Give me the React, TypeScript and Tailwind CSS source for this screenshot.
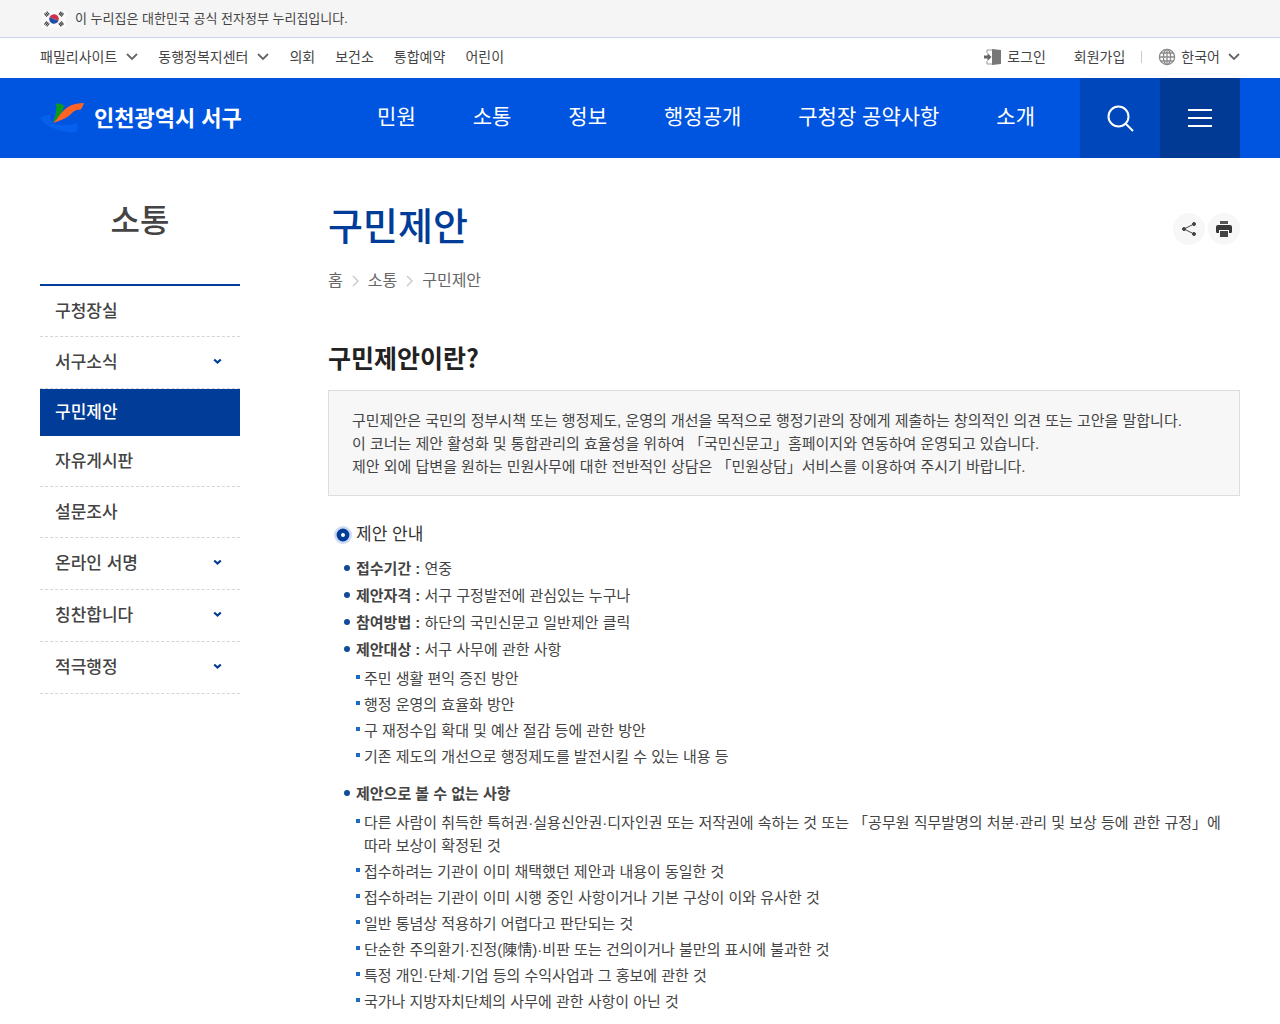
import type { ReactNode } from "react";

const FAMILY_MENUS = ["패밀리사이트", "동행정복지센터"];
const TOP_LINKS = ["의회", "보건소", "통합예약", "어린이"];
const MAIN_MENUS = ["민원", "소통", "정보", "행정공개", "구청장 공약사항", "소개"];

type SideMenu = { label: string; hasChildren?: boolean; active?: boolean };

const SIDE_MENUS: SideMenu[] = [
  { label: "구청장실" },
  { label: "서구소식", hasChildren: true },
  { label: "구민제안", active: true },
  { label: "자유게시판" },
  { label: "설문조사" },
  { label: "온라인 서명", hasChildren: true },
  { label: "칭찬합니다", hasChildren: true },
  { label: "적극행정", hasChildren: true },
];

const GUIDE = [
  { label: "접수기간 :", value: "연중" },
  { label: "제안자격 :", value: "서구 구정발전에 관심있는 누구나" },
  { label: "참여방법 :", value: "하단의 국민신문고 일반제안 클릭" },
  { label: "제안대상 :", value: "서구 사무에 관한 사항" },
];

const TARGETS = [
  "주민 생활 편익 증진 방안",
  "행정 운영의 효율화 방안",
  "구 재정수입 확대 및 예산 절감 등에 관한 방안",
  "기존 제도의 개선으로 행정제도를 발전시킬 수 있는 내용 등",
];

const EXCLUSIONS = [
  "다른 사람이 취득한 특허권·실용신안권·디자인권 또는 저작권에 속하는 것 또는 「공무원 직무발명의 처분·관리 및 보상 등에 관한 규정」에 따라 보상이 확정된 것",
  "접수하려는 기관이 이미 채택했던 제안과 내용이 동일한 것",
  "접수하려는 기관이 이미 시행 중인 사항이거나 기본 구상이 이와 유사한 것",
  "일반 통념상 적용하기 어렵다고 판단되는 것",
  "단순한 주의환기·진정(陳情)·비판 또는 건의이거나 불만의 표시에 불과한 것",
  "특정 개인·단체·기업 등의 수익사업과 그 홍보에 관한 것",
  "국가나 지방자치단체의 사무에 관한 사항이 아닌 것",
];

function Chevron() {
  return (
    <svg width="12" height="8" viewBox="0 0 12 8" fill="none" stroke="#666" strokeWidth="1.8" aria-hidden="true">
      <path d="M1 1l5 5 5-5" />
    </svg>
  );
}

function FlagIcon() {
  return (
    <svg width="24" height="18" viewBox="0 0 24 18" aria-hidden="true">
      <rect width="24" height="18" fill="#fafafa" />
      <path d="M7.2 9a4.8 4.8 0 0 1 9.6 0z" fill="#d0304a" transform="rotate(20 12 9)" />
      <path d="M7.2 9a4.8 4.8 0 0 0 9.6 0z" fill="#1f4fa8" transform="rotate(20 12 9)" />
      <g stroke="#333" strokeWidth="4" strokeDasharray="1.1 0.5">
        <path d="M3.2 5.4l3.2-2.6" />
        <path d="M17.6 2.8l3.2 2.6" />
        <path d="M3.2 12.6l3.2 2.6" />
        <path d="M17.6 15.2l3.2-2.6" />
      </g>
    </svg>
  );
}

function LogoMark() {
  return (
    <svg width="46" height="34" viewBox="0 0 46 34" aria-hidden="true">
      <path d="M0 17c3-2 6-3 10-3l1 8c8 3 16 3 27 0l-1 9c-5 1-11 0-15-1-9-2-17-6-22-13z" fill="#0560ee" />
      <path d="M16 3c3-1 6 0 8 2-1 5-5 12-12 17 4-7 5-13 4-19z" fill="#0a9a1c" />
      <path d="M13 22c5-4 8-12 15-16 5-3 10-4 16-4-1 3-2 5-4 7-4-1-7 2-10 5-5 4-11 6-17 8z" fill="#ff6426" />
    </svg>
  );
}

function LoginIcon() {
  return (
    <svg width="18" height="18" viewBox="0 0 18 18" aria-hidden="true">
      <path d="M8 1l9 1v14l-9 1z" fill="#777" />
      <path d="M8 2H3v3M3 13v3h5" fill="none" stroke="#999" />
      <path d="M0 7.5h3.5V5l4 4-4 4v-2.5H0z" fill="#666" />
    </svg>
  );
}

function GlobeIcon() {
  return (
    <svg width="18" height="18" viewBox="0 0 18 18" fill="none" stroke="#8a8a8a" strokeWidth="1.3" aria-hidden="true">
      <circle cx="9" cy="9" r="7.6" />
      <ellipse cx="9" cy="9" rx="3.6" ry="7.6" />
      <path d="M9 1.4v15.2M1.4 9h15.2M2.6 5h12.8M2.6 13h12.8" />
    </svg>
  );
}

function DotItem({ children }: { children: ReactNode }) {
  return (
    <li className="flex gap-[6px]">
      <span className="mt-2 size-[6px] shrink-0 rounded-full bg-[#124a9c]" />
      <div className="min-w-0">{children}</div>
    </li>
  );
}

function SquareList({ items }: { items: string[] }) {
  return (
    <ul className="mt-[6px] ml-7 flex flex-col gap-[3px]">
      {items.map((item) => (
        <li key={item} className="flex gap-1">
          <span className="mt-2 size-1 shrink-0 bg-[#1a6bc4]" />
          <span className="min-w-0">{item}</span>
        </li>
      ))}
    </ul>
  );
}

export default function App() {
  return (
    <div className="min-h-screen bg-white font-['Liberation_Sans','Noto_Sans_CJK_KR',sans-serif] text-[15px] leading-[23px] break-keep text-[#444]">
      <div className="flex h-[38px] items-center gap-[9px] border-b border-[#c9d3ee] bg-[#f5f5f5] px-10 text-[13px]">
        <span className="flex pl-[2px]">
          <FlagIcon />
        </span>
        <p>이 누리집은 대한민국 공식 전자정부 누리집입니다.</p>
      </div>

      <div className="flex h-10 items-center justify-between px-10 pb-[2px] text-sm">
        <div className="flex items-center gap-5">
          {FAMILY_MENUS.map((label) => (
            <button key={label} type="button" className="flex items-center gap-[9px]">
              {label}
              <Chevron />
            </button>
          ))}
          {TOP_LINKS.map((label) => (
            <a key={label} href="#">
              {label}
            </a>
          ))}
        </div>
        <div className="flex items-center">
          <a href="#" className="flex items-center gap-[5px]">
            <LoginIcon />
            로그인
          </a>
          <a href="#" className="ml-7">
            회원가입
          </a>
          <span className="mx-4 h-3 w-px bg-[#ccc]" />
          <button type="button" className="flex items-center gap-[5px]">
            <GlobeIcon />
            한국어
            <span className="ml-[3px]">
              <Chevron />
            </span>
          </button>
        </div>
      </div>

      <header className="flex h-20 items-center bg-[#0055e0] px-10 text-white">
        <a href="#" className="flex items-center gap-2 text-[22px] font-bold">
          <LogoMark />
          인천광역시 서구
        </a>
        <nav className="flex flex-1 items-center justify-end gap-[57px] pr-[45px] pb-1 text-[21px]">
          {MAIN_MENUS.map((label) => (
            <a key={label} href="#">
              {label}
            </a>
          ))}
        </nav>
        <button type="button" aria-label="검색" className="flex size-20 items-center justify-center bg-[#0047bb]">
          <svg width="28" height="28" viewBox="0 0 28 28" fill="none" stroke="#fff" strokeWidth="2">
            <circle cx="12.5" cy="12.5" r="10" />
            <path d="M19.5 19.5L27 27" />
          </svg>
        </button>
        <button type="button" aria-label="전체메뉴" className="flex size-20 items-center justify-center bg-[#003a94]">
          <svg width="24" height="20" viewBox="0 0 24 20" stroke="#fff" strokeWidth="2">
            <path d="M0 2h24M0 10h24M0 18h24" />
          </svg>
        </button>
      </header>

      <div className="flex gap-[88px] px-10">
        <aside className="w-[200px] shrink-0">
          <h2 className="py-10 text-center text-[32px] leading-[46px] font-medium">소통</h2>
          <ul className="border-t-2 border-[#003c98] text-[17px] font-medium">
            {SIDE_MENUS.map(({ label, hasChildren, active }) => (
              <li key={label}>
                <a
                  href="#"
                  className={
                    active
                      ? "flex h-[47px] items-center bg-[#003c98] px-[15px] text-white"
                      : hasChildren
                        ? "flex h-[52px] items-center justify-between border-b border-dashed border-[#d5d5d5] pr-[18px] pl-[15px]"
                        : "flex h-[51px] items-center border-b border-dashed border-[#d5d5d5] px-[15px]"
                  }
                >
                  {label}
                  {hasChildren && (
                    <svg width="9" height="9" viewBox="0 0 9 9" fill="none" stroke="#003c98" strokeWidth="2.2">
                      <path d="M1.2 1.5l3.3 3 3.3-3" />
                    </svg>
                  )}
                </a>
              </li>
            ))}
          </ul>
        </aside>

        <main className="min-w-0 flex-1 pt-10">
          <div className="flex items-center justify-between">
            <h1 className="text-[38px] leading-[58px] font-medium text-[#003c98]">구민제안</h1>
            <div className="flex gap-[3px] pt-1">
              <button type="button" aria-label="공유" className="flex size-8 items-center justify-center rounded-full bg-[#f7f7f7]">
                <svg width="16" height="16" viewBox="0 0 16 16" fill="#444" stroke="#444">
                  <path d="M13 3L3 8l10 5" fill="none" />
                  <circle cx="13" cy="3" r="1.5" />
                  <circle cx="3" cy="8" r="1.5" />
                  <circle cx="13" cy="13" r="1.5" />
                </svg>
              </button>
              <button type="button" aria-label="인쇄" className="flex size-8 items-center justify-center rounded-full bg-[#f7f7f7]">
                <svg width="16" height="16" viewBox="0 0 16 16">
                  <path d="M4 0h8v3H4z" fill="#555" />
                  <path d="M2 4h12a2 2 0 0 1 2 2v3a2 2 0 0 1-2 3h-1V9H3v3H2a2 2 0 0 1-2-3V6a2 2 0 0 1 2-2z" fill="#383838" />
                  <path d="M4 10h8v6H4z" fill="#444" />
                </svg>
              </button>
            </div>
          </div>

          <ol className="mt-[13px] flex items-center gap-[9px] text-base text-[#666]">
            {["홈", "소통", "구민제안"].map((label, i) => (
              <li key={label} className="flex items-center gap-[9px]">
                {i > 0 && (
                  <svg width="7" height="12" viewBox="0 0 7 12" fill="none" stroke="#ccc" strokeWidth="1.5">
                    <path d="M1 1l5 5-5 5" />
                  </svg>
                )}
                <a href="#">{label}</a>
              </li>
            ))}
          </ol>

          <h2 className="mt-[45px] font-['Noto_Sans_CJK_KR',sans-serif] text-[25px] leading-[38px] font-bold text-[#222]">
            구민제안이란?
          </h2>
          <div className="mt-[14px] border border-[#ddd] bg-[#f7f7f7] px-[23px] pt-[18px] pb-[17px]">
            <p>구민제안은 국민의 정부시책 또는 행정제도, 운영의 개선을 목적으로 행정기관의 장에게 제출하는 창의적인 의견 또는 고안을 말합니다.</p>
            <p>이 코너는 제안 활성화 및 통합관리의 효율성을 위하여 「국민신문고」홈페이지와 연동하여 운영되고 있습니다.</p>
            <p>제안 외에 답변을 원하는 민원사무에 대한 전반적인 상담은 「민원상담」서비스를 이용하여 주시기 바랍니다.</p>
          </div>

          <h3 className="mt-[26px] flex items-center gap-1 pl-[6px] text-[17px] leading-[26px] text-[#333]">
            <svg width="18" height="18" viewBox="0 0 18 18" aria-hidden="true">
              <circle cx="9" cy="9" r="9" fill="#cddcf3" />
              <circle cx="9" cy="9" r="4.2" fill="#fff" stroke="#003c98" strokeWidth="4.4" />
            </svg>
            제안 안내
          </h3>
          <ul className="mt-[9px] ml-4 flex flex-col gap-1">
            {GUIDE.map(({ label, value }) => (
              <DotItem key={label}>
                <strong>{label}</strong> {value}
              </DotItem>
            ))}
          </ul>
          <SquareList items={TARGETS} />

          <ul className="mt-[14px] ml-4">
            <DotItem>
              <strong>제안으로 볼 수 없는 사항</strong>
            </DotItem>
          </ul>
          <SquareList items={EXCLUSIONS} />
        </main>
      </div>
    </div>
  );
}
